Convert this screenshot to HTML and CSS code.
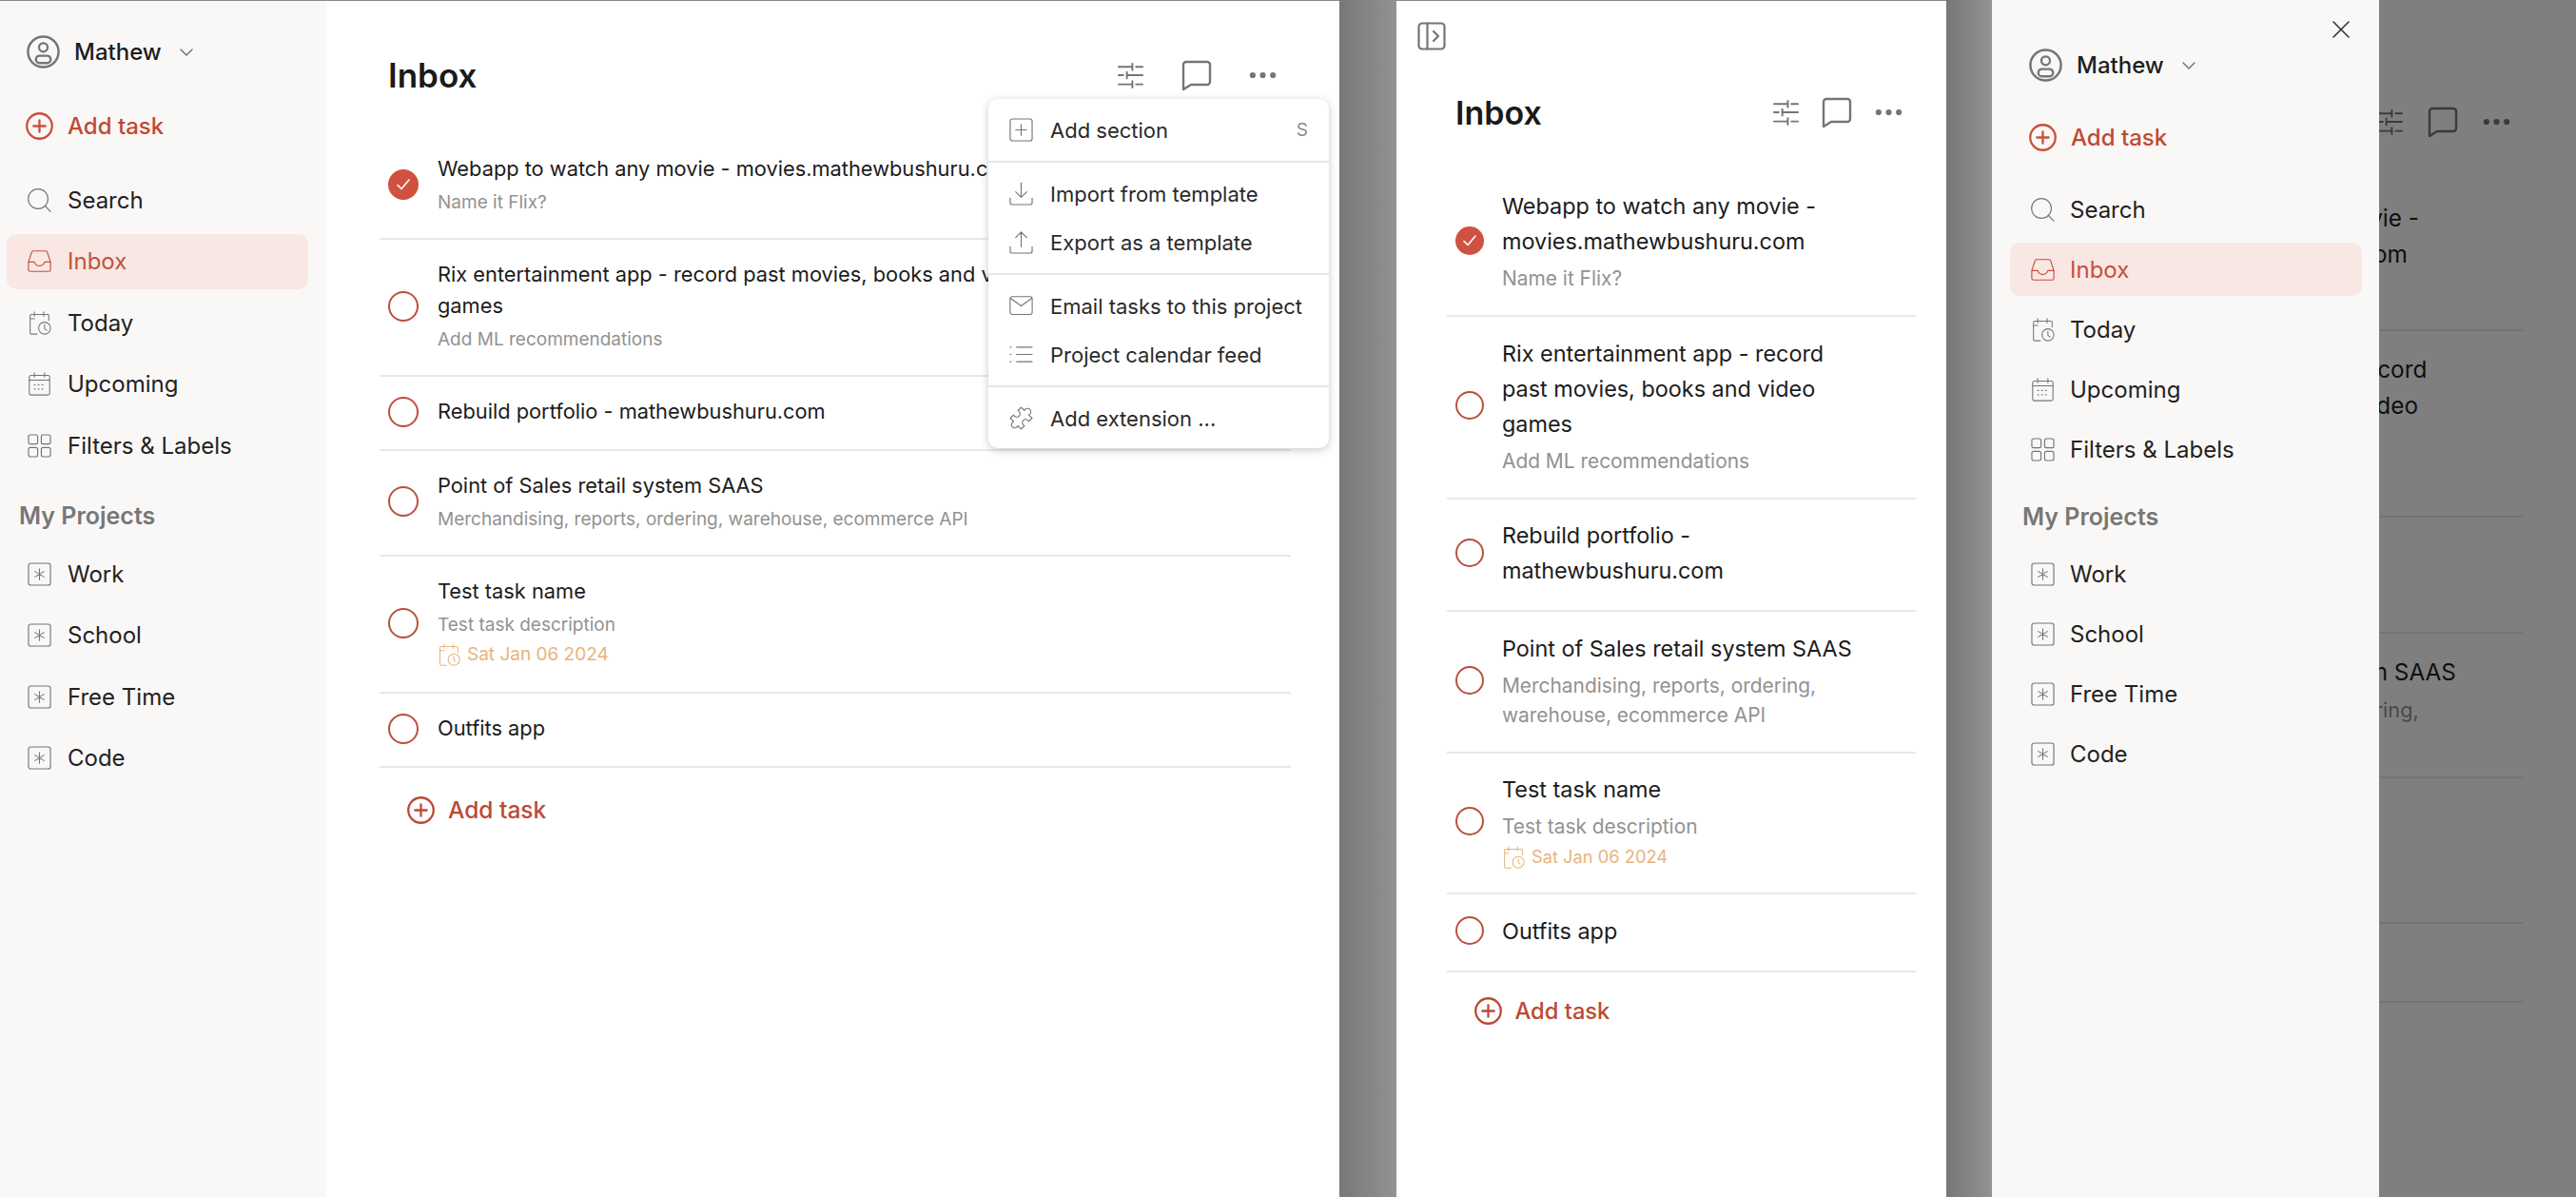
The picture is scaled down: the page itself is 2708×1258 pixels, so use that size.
FILE: index.html
```html
<!DOCTYPE html>
<html>
<head>
<meta charset="UTF-8">
<title>Inbox</title>
<link rel="stylesheet" href="styles.css">
</head>
<body>

<svg class="sprite">
  <symbol id="i-avatar" viewBox="0 0 34 34"><circle cx="17" cy="17" r="15.6" stroke-width="2.4"/><circle cx="17" cy="12.5" r="4.4" stroke-width="2.2"/><rect x="9.5" y="21" width="15" height="7.5" rx="3.7" stroke-width="2.4"/></symbol>
  <symbol id="i-chevron" viewBox="0 0 14 8"><path d="M1 1l6 6 6-6" stroke-width="1.5"/></symbol>
  <symbol id="i-plus" viewBox="0 0 28 28"><circle cx="14" cy="14" r="12.8" stroke-width="2.2"/><path d="M14 8v12M8 14h12" stroke-width="2.2"/></symbol>
  <symbol id="i-search" viewBox="0 0 26 26"><circle cx="11.5" cy="11.5" r="10.8" stroke-width="1.2"/><path d="M19 19l6 6.4" stroke-width="1.2"/></symbol>
  <symbol id="i-inbox" viewBox="0 0 28 28"><path d="M1 15L5 3a2 2 0 0 1 2-1h14a2 2 0 0 1 2 1l4 12v9a2 2 0 0 1-2 2H3a2 2 0 0 1-2-2zM1 15h7c1 3 3 4.5 6 4.5s5-1.5 6-4.5h7" stroke-width="1.3"/></symbol>
  <symbol id="i-today" viewBox="0 0 28 28"><path d="M25 11V5.5a1.5 1.5 0 0 0-1.5-1.5h-19A1.5 1.5 0 0 0 3 5.5v20A1.5 1.5 0 0 0 4.5 27H11M8 1v5M19 1v5M3 9h5" stroke-width="1.2"/><circle cx="20" cy="20" r="7" stroke-width="1.2"/><path d="M20 16v4.5l2.5 2" stroke-width="1.2"/></symbol>
  <symbol id="i-upcoming" viewBox="0 0 28 28"><rect x="2" y="4" width="24" height="23" rx="2" stroke-width="1.2"/><path d="M8 1v5M20 1v5M2 9.5h24" stroke-width="1.2"/><path d="M8 15h12M8 20h12" stroke-width="1.2" stroke-dasharray="1 3.5"/></symbol>
  <symbol id="i-filters" viewBox="0 0 26 26"><rect x="1" y="1" width="10" height="10" rx="2" stroke-width="1.2"/><rect x="15" y="1" width="10" height="10" rx="2" stroke-width="1.2"/><rect x="1" y="15" width="10" height="10" rx="2" stroke-width="1.2"/><rect x="15" y="15" width="10" height="10" rx="2" stroke-width="1.2"/></symbol>
  <symbol id="i-project" viewBox="0 0 26 26"><rect x="1" y="1" width="24" height="24" rx="2.5" stroke-width="1.2"/><path d="M13 7v12M8 10l10 6M18 10L8 16" stroke-width="1.1"/></symbol>
  <symbol id="i-sliders" viewBox="0 0 28 28"><path d="M1 5h14M20 5h7M16 1.5v7M1 14h5M11 14h16M10 10.5v7M1 24h14M20 24h7M16 20.5v7" stroke-width="2"/></symbol>
  <symbol id="i-comment" viewBox="0 0 32 32"><path d="M5 2h22a3 3 0 0 1 3 3v18a3 3 0 0 1-3 3H10l-8 5V5a3 3 0 0 1 3-3z" stroke-width="2.4"/></symbol>
  <symbol id="i-dots" viewBox="0 0 30 8"><circle class="fill" cx="4" cy="4" r="3.2"/><circle class="fill" cx="15" cy="4" r="3.2"/><circle class="fill" cx="26" cy="4" r="3.2"/></symbol>
  <symbol id="i-toggle" viewBox="0 0 30 30"><rect x="1.5" y="1.5" width="27" height="27" rx="3.5" stroke-width="2.2"/><path d="M10.5 1.5v27" stroke-width="2.2"/><path d="M17 10l5 5-5 5" stroke-width="2.2"/></symbol>
  <symbol id="i-close" viewBox="0 0 18 18"><path d="M1 1l16 16M17 1L1 17" stroke-width="1.6"/></symbol>
  <symbol id="i-section" viewBox="0 0 26 26"><rect x="1" y="1" width="24" height="24" rx="2.5" stroke-width="1.2"/><path d="M13 7v12M7 13h12" stroke-width="1.2"/></symbol>
  <symbol id="i-import" viewBox="0 0 26 26"><path d="M13 1v15M7 11l6 6 6-6M1 18v5a2 2 0 0 0 2 2h20a2 2 0 0 0 2-2v-5" stroke-width="1.2"/></symbol>
  <symbol id="i-export" viewBox="0 0 26 26"><path d="M13 18V2M7 8l6-6 6 6M1 18v5a2 2 0 0 0 2 2h20a2 2 0 0 0 2-2v-5" stroke-width="1.2"/></symbol>
  <symbol id="i-mail" viewBox="0 0 28 24"><rect x="1" y="1" width="26" height="21" rx="2.5" stroke-width="1.2"/><path d="M1.5 3l12.5 9 12.5-9" stroke-width="1.2"/></symbol>
  <symbol id="i-feed" viewBox="0 0 26 26"><path d="M8 5h17M8 13h17M8 21h17" stroke-width="1.2"/><path d="M1 5h1M1 13h1M1 21h1" stroke-width="1.2"/></symbol>
  <symbol id="i-puzzle" viewBox="3.5 3.5 17 17"><path transform="rotate(45 12 12)" d="M6.5 6.5H9.8a2.4 2.4 0 1 1 4.4 0H17.5V9.8a2.4 2.4 0 1 0 0 4.4V17.5H14.2a2.4 2.4 0 1 1-4.4 0H6.5V14.2a2.4 2.4 0 1 0 0-4.4z" stroke-width="0.75"/></symbol>
  <symbol id="i-check" viewBox="0 0 16 14"><path d="M2 7.5l4 4L14 2" stroke-width="1.6"/></symbol>
</svg>

<div class="shots">

  <!-- wide layout, menu open -->
  <section class="panel panel-wide">
    <nav class="side">
      <div class="user"><svg class="ic avatar"><use href="#i-avatar"/></svg><span>Mathew</span><svg class="ic chevron"><use href="#i-chevron"/></svg></div>
      <div class="row add"><svg class="ic plus"><use href="#i-plus"/></svg>Add task</div>
      <div class="row"><svg class="ic"><use href="#i-search"/></svg>Search</div>
      <div class="row active"><svg class="ic"><use href="#i-inbox"/></svg>Inbox</div>
      <div class="row"><svg class="ic"><use href="#i-today"/></svg>Today</div>
      <div class="row"><svg class="ic"><use href="#i-upcoming"/></svg>Upcoming</div>
      <div class="row"><svg class="ic"><use href="#i-filters"/></svg>Filters &amp; Labels</div>
      <h3>My Projects</h3>
      <div class="row"><svg class="ic"><use href="#i-project"/></svg>Work</div>
      <div class="row"><svg class="ic"><use href="#i-project"/></svg>School</div>
      <div class="row"><svg class="ic"><use href="#i-project"/></svg>Free Time</div>
      <div class="row"><svg class="ic"><use href="#i-project"/></svg>Code</div>
    </nav>
    <main class="main">
      <header class="head">
        <h1>Inbox</h1>
        <div class="tools">
          <svg class="ic sliders"><use href="#i-sliders"/></svg>
          <svg class="ic comment"><use href="#i-comment"/></svg>
          <svg class="ic dots"><use href="#i-dots"/></svg>
        </div>
      </header>
      <ul class="tasks">
        <li class="task"><span class="circle done"><svg class="ic"><use href="#i-check"/></svg></span><div class="body"><div class="name">Webapp to watch any movie - movies.mathewbushuru.com</div><div class="desc">Name it Flix?</div></div></li>
        <li class="task"><span class="circle"></span><div class="body"><div class="name">Rix entertainment app - record past movies, books and video games</div><div class="desc">Add ML recommendations</div></div></li>
        <li class="task"><span class="circle"></span><div class="body"><div class="name">Rebuild portfolio - mathewbushuru.com</div></div></li>
        <li class="task"><span class="circle"></span><div class="body"><div class="name">Point of Sales retail system SAAS</div><div class="desc">Merchandising, reports, ordering, warehouse, ecommerce API</div></div></li>
        <li class="task"><span class="circle"></span><div class="body"><div class="name">Test task name</div><div class="desc">Test task description</div><div class="date"><svg class="ic"><use href="#i-today"/></svg>Sat Jan 06 2024</div></div></li>
        <li class="task"><span class="circle"></span><div class="body"><div class="name">Outfits app</div></div></li>
      </ul>
      <div class="add-task"><svg class="ic plus"><use href="#i-plus"/></svg>Add task</div>
    </main>
    <div class="menu">
      <div class="menu-sec"><div class="menu-item"><svg class="ic"><use href="#i-section"/></svg>Add section<span class="key">S</span></div></div>
      <div class="menu-sec"><div class="menu-item"><svg class="ic"><use href="#i-import"/></svg>Import from template</div><div class="menu-item"><svg class="ic"><use href="#i-export"/></svg>Export as a template</div></div>
      <div class="menu-sec"><div class="menu-item"><svg class="ic"><use href="#i-mail"/></svg>Email tasks to this project</div><div class="menu-item"><svg class="ic"><use href="#i-feed"/></svg>Project calendar feed</div></div>
      <div class="menu-sec"><div class="menu-item"><svg class="ic"><use href="#i-puzzle"/></svg>Add extension ...</div></div>
    </div>
  </section>

  <div class="gap gap-a"></div>

  <!-- narrow layout -->
  <section class="panel panel-narrow">
    <main class="main">
      <svg class="ic toggle"><use href="#i-toggle"/></svg>
      <header class="head">
        <h1>Inbox</h1>
        <div class="tools">
          <svg class="ic sliders"><use href="#i-sliders"/></svg>
          <svg class="ic comment"><use href="#i-comment"/></svg>
          <svg class="ic dots"><use href="#i-dots"/></svg>
        </div>
      </header>
      <ul class="tasks">
        <li class="task"><span class="circle done"><svg class="ic"><use href="#i-check"/></svg></span><div class="body"><div class="name">Webapp to watch any movie - movies.mathewbushuru.com</div><div class="desc">Name it Flix?</div></div></li>
        <li class="task"><span class="circle"></span><div class="body"><div class="name">Rix entertainment app - record past movies, books and video games</div><div class="desc">Add ML recommendations</div></div></li>
        <li class="task"><span class="circle"></span><div class="body"><div class="name">Rebuild portfolio - mathewbushuru.com</div></div></li>
        <li class="task"><span class="circle"></span><div class="body"><div class="name">Point of Sales retail system SAAS</div><div class="desc">Merchandising, reports, ordering, warehouse, ecommerce API</div></div></li>
        <li class="task"><span class="circle"></span><div class="body"><div class="name">Test task name</div><div class="desc">Test task description</div><div class="date"><svg class="ic"><use href="#i-today"/></svg>Sat Jan 06 2024</div></div></li>
        <li class="task"><span class="circle"></span><div class="body"><div class="name">Outfits app</div></div></li>
      </ul>
      <div class="add-task"><svg class="ic plus"><use href="#i-plus"/></svg>Add task</div>
    </main>
  </section>

  <div class="gap gap-b"></div>

  <!-- narrow layout, drawer open -->
  <section class="panel panel-drawer">
    <main class="main">
      <header class="head">
        <h1>Inbox</h1>
        <div class="tools">
          <svg class="ic sliders"><use href="#i-sliders"/></svg>
          <svg class="ic comment"><use href="#i-comment"/></svg>
          <svg class="ic dots"><use href="#i-dots"/></svg>
        </div>
      </header>
      <ul class="tasks">
        <li class="task"><span class="circle done"></span><div class="body"><div class="name">Webapp to watch any movie - movies.mathewbushuru.com</div><div class="desc">Name it Flix?</div></div></li>
        <li class="task"><span class="circle"></span><div class="body"><div class="name">Rix entertainment app - record past movies, books and video games</div><div class="desc">Add ML recommendations</div></div></li>
        <li class="task"><span class="circle"></span><div class="body"><div class="name">Rebuild portfolio - mathewbushuru.com</div></div></li>
        <li class="task"><span class="circle"></span><div class="body"><div class="name">Point of Sales retail system SAAS</div><div class="desc">Merchandising, reports, ordering, warehouse, ecommerce API</div></div></li>
        <li class="task"><span class="circle"></span><div class="body"><div class="name">Test task name</div><div class="desc">Test task description</div><div class="date"><svg class="ic"><use href="#i-today"/></svg>Sat Jan 06 2024</div></div></li>
        <li class="task"><span class="circle"></span><div class="body"><div class="name">Outfits app</div></div></li>
      </ul>
    </main>
    <div class="scrim"></div>
    <nav class="side">
      <svg class="ic close"><use href="#i-close"/></svg>
      <div class="user"><svg class="ic avatar"><use href="#i-avatar"/></svg><span>Mathew</span><svg class="ic chevron"><use href="#i-chevron"/></svg></div>
      <div class="row add"><svg class="ic plus"><use href="#i-plus"/></svg>Add task</div>
      <div class="row"><svg class="ic"><use href="#i-search"/></svg>Search</div>
      <div class="row active"><svg class="ic"><use href="#i-inbox"/></svg>Inbox</div>
      <div class="row"><svg class="ic"><use href="#i-today"/></svg>Today</div>
      <div class="row"><svg class="ic"><use href="#i-upcoming"/></svg>Upcoming</div>
      <div class="row"><svg class="ic"><use href="#i-filters"/></svg>Filters &amp; Labels</div>
      <h3>My Projects</h3>
      <div class="row"><svg class="ic"><use href="#i-project"/></svg>Work</div>
      <div class="row"><svg class="ic"><use href="#i-project"/></svg>School</div>
      <div class="row"><svg class="ic"><use href="#i-project"/></svg>Free Time</div>
      <div class="row"><svg class="ic"><use href="#i-project"/></svg>Code</div>
    </nav>
  </section>

</div>
</body>
</html>
```

FILE: styles.css
```css
* {
  box-sizing: border-box;
}

html, body {
  margin: 0;
  height: 100%;
  overflow: hidden;
  background: #7f7f7f;
}

body {
  font-family: "Inter", "Liberation Sans", sans-serif;
  color: #1d1d1d;
}

h1, h3, ul {
  margin: 0;
  padding: 0;
}

ul {
  list-style: none;
}

.sprite {
  display: none;
}

/* icons use the sprite at the top of index.html */
.ic {
  display: block;
  flex: none;
  width: 25px;
  height: 25px;
  fill: none;
  stroke: #757575;
  stroke-linecap: round;
  stroke-linejoin: round;
}

.fill {
  fill: #757575;
  stroke: none;
}

.shots {
  display: flex;
  width: 2708px;
  height: 1258px;
}

.panel {
  position: relative;
  display: flex;
  height: 100%;
  background: #fff;
  overflow: hidden;
}

.panel-wide {
  width: 1408px;
  border-top: 1px solid #8a8a8a;
}

.panel-narrow {
  width: 578px;
  border-top: 1px solid #8a8a8a;
}

.panel-drawer {
  width: 614px;
}

.gap {
  height: 100%;
  background: linear-gradient(to right, #777, #939393);
}

.gap-a {
  width: 60px;
}

.gap-b {
  width: 48px;
}

/* sidebar */
.side {
  flex: none;
  width: 343px;
  padding: 36px 19px 0 7px;
  background: #faf8f7;
  --row: 58px;
  --row-gap: 6.5px;
}

.side .user {
  display: flex;
  align-items: center;
  height: 35px;
  padding-left: 21px;
  margin-bottom: 31.5px;
  font-size: 24px;
  font-weight: 500;
}

.side .user span {
  margin-left: 15px;
}

.avatar {
  width: 35px;
  height: 35px;
}

.chevron {
  width: 14px;
  height: 8px;
  margin-left: 19px;
}

.row {
  display: flex;
  align-items: center;
  gap: 17px;
  height: var(--row);
  margin-bottom: var(--row-gap);
  padding-left: 22px;
  border-radius: 10px;
  font-size: 24px;
  color: #222;
}

.row.add {
  margin-bottom: 19.5px;
  padding-left: 20px;
  gap: 15px;
  font-weight: 500;
  color: #bf4a33;
}

.plus {
  width: 29px;
  height: 29px;
  stroke: #c9503c;
}

.row.active {
  background: #f9e7e4;
  color: #c4513c;
}

.row.active .ic {
  stroke: #c4513c;
}

.side h3 {
  height: 70.5px;
  padding: 21px 0 0 13px;
  font-size: 25px;
  line-height: 34px;
  font-weight: 600;
  color: #777;
}

/* main column */
.main {
  flex: 1;
  min-width: 0;
  padding: 0 51px 0 56px;
}

.head {
  display: flex;
  align-items: center;
  justify-content: space-between;
  height: 140px;
  padding: 15px 15px 0 9px;
}

.head h1 {
  font-size: 35px;
  font-weight: 600;
  color: #1a1a1a;
}

.tools {
  display: flex;
  align-items: center;
  gap: 39.5px;
}

.sliders {
  width: 27px;
  height: 28px;
}

.comment {
  width: 32px;
  height: 32px;
}

.dots {
  width: 29px;
  height: 8px;
}

.task {
  display: flex;
  align-items: center;
  gap: 20px;
  padding: 20px 0 23px 9px;
  border-bottom: 2px solid #e8e8ec;
}

.circle {
  display: flex;
  align-items: center;
  justify-content: center;
  flex: none;
  width: 32px;
  height: 32px;
  border: 2px solid #bb4f3e;
  border-radius: 50%;
}

.circle.done {
  background: #cf5240;
  border-color: #cf5240;
}

.circle .ic {
  width: 16px;
  height: 14px;
  stroke: #fff;
}

.body {
  width: 650px;
}

.name {
  font-size: 21.8px;
  line-height: 33px;
  color: #1c1c1c;
}

.desc {
  margin: 4px 0 -1px;
  font-size: 19px;
  line-height: 30px;
  color: #929292;
}

.date {
  display: flex;
  align-items: center;
  gap: 7px;
  margin-top: 1px;
  font-size: 19px;
  line-height: 32px;
  color: #e8b47e;
}

.date .ic {
  width: 24px;
  height: 24px;
  stroke: #e8b47e;
}

.add-task {
  display: flex;
  align-items: center;
  gap: 14px;
  padding: 29px 0 0 29px;
  font-size: 24.5px;
  font-weight: 500;
  color: #bb4a34;
}

.add-task .plus {
  stroke: #bb4a34;
}

/* the more menu sits over the list */
.menu {
  position: absolute;
  left: 1039px;
  top: 103px;
  width: 358px;
  height: 367px;
  background: #fff;
  border-radius: 10px;
  box-shadow: 0 2px 8px rgba(40, 40, 60, .25);
}

.menu-sec {
  padding: 7px 0;
  border-top: 2px solid #e6e6e6;
}

.menu-sec:first-child {
  border-top: 0;
}

.menu-item {
  display: flex;
  align-items: center;
  gap: 18px;
  height: 51px;
  padding: 0 22px;
  font-size: 22px;
  color: #2a2a2a;
}

.key {
  margin-left: auto;
  font-size: 19px;
  color: #8a8a8a;
}

/* narrow */
.panel-narrow .main {
  padding: 0 32px 0 52.5px;
}

.toggle {
  width: 30px;
  height: 30px;
  margin: 22px 0 0 -30.5px;
}

.panel-narrow .head {
  height: 125.5px;
  padding: 5px 14px 0 9.5px;
}

.panel-narrow .head h1 {
  font-size: 34px;
}

.panel-narrow .tools {
  gap: 24px;
}

.panel-narrow .task {
  gap: 19px;
  padding: 19.5px 0 23px 9.5px;
}

.panel-narrow .circle {
  width: 30px;
  height: 30px;
}

.panel-narrow .body {
  width: 372px;
}

.panel-narrow .name {
  font-size: 23.4px;
  line-height: 37px;
}

.panel-narrow .desc {
  margin: 5px 0 0;
  font-size: 20.9px;
  line-height: 31px;
}

.panel-narrow .date {
  margin-top: 1px;
  margin-bottom: -1px;
  font-size: 18.3px;
  line-height: 31px;
}

.panel-narrow .add-task {
  padding: 26px 0 0 29px;
  font-size: 23.7px;
}

/* drawer */
.panel-drawer .main {
  padding: 0 56px 0 44px;
}

.panel-drawer .head {
  height: 189px;
  padding: 67px 13px 0 10px;
}

.panel-drawer .tools {
  gap: 26px;
}

.panel-drawer .task {
  gap: 21px;
  padding: 21px 0 22.5px 10px;
}

.panel-drawer .circle {
  width: 31px;
  height: 31px;
}

.panel-drawer .body {
  width: 390px;
}

.panel-drawer .name {
  font-size: 24.3px;
  line-height: 38px;
}

.panel-drawer .desc {
  margin: 5px 0 0;
  font-size: 21.7px;
  line-height: 32px;
}

.panel-drawer .date {
  margin-top: 0;
  line-height: 32px;
}

.scrim {
  position: absolute;
  inset: 0;
  background: rgba(0, 0, 0, .5);
}

.panel-drawer .side {
  position: absolute;
  left: 0;
  top: 0;
  width: 407px;
  height: 100%;
  padding: 51px 18px 0 19px;
  background: #faf8f6;
  --row: 56px;
  --row-gap: 7px;
}

.panel-drawer .side .user {
  padding-left: 20px;
  margin-bottom: 30px;
}

.panel-drawer .row {
  gap: 16px;
}

.panel-drawer .row.add {
  gap: 15px;
  margin-bottom: 20px;
}

.panel-drawer .side h3 {
  height: 68px;
  padding: 20px 0 0 13px;
  line-height: 32px;
}

.close {
  position: absolute;
  left: 358px;
  top: 22px;
  width: 18px;
  height: 18px;
  stroke: #333;
}
```
